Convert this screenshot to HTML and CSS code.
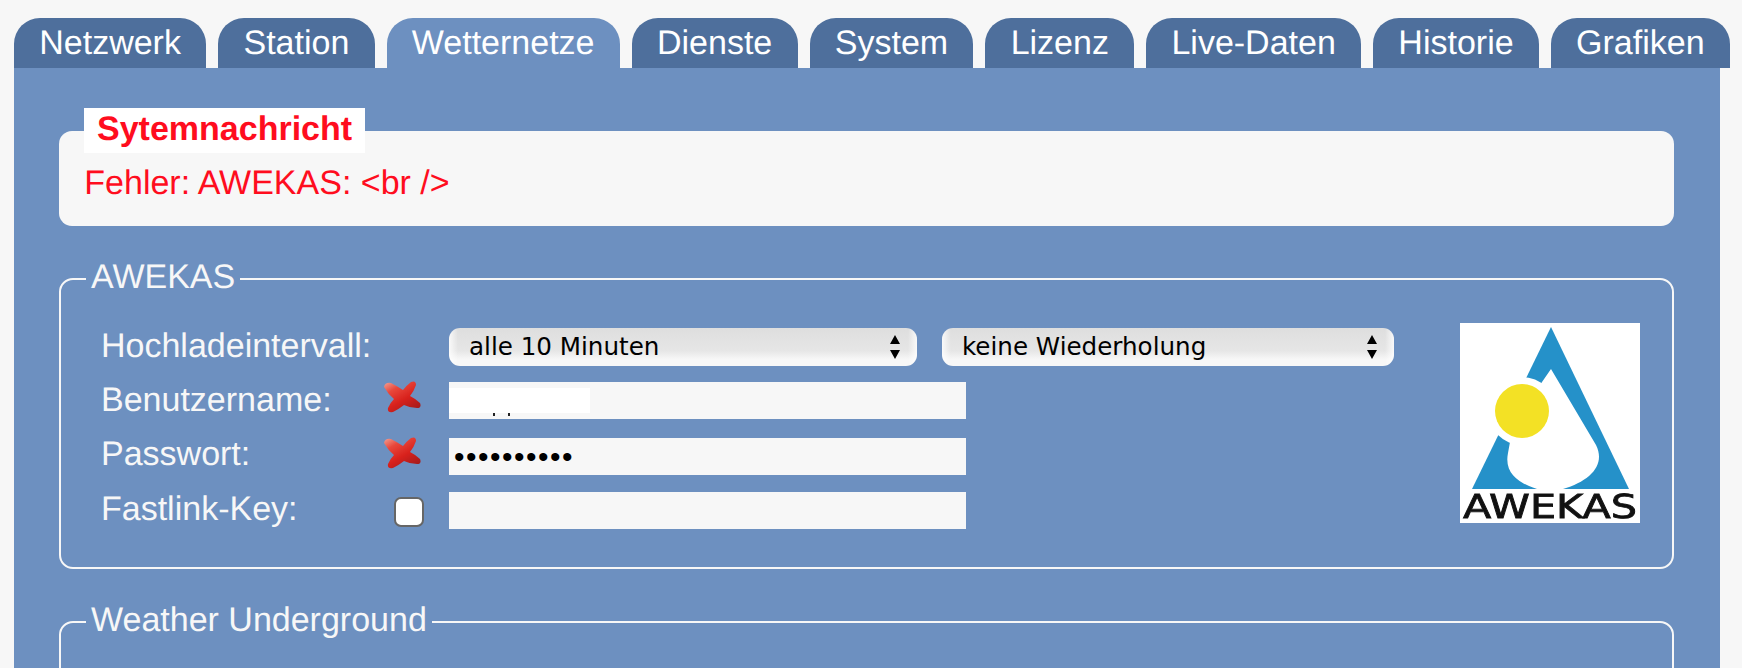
FILE: index.html
```html
<!DOCTYPE html>
<html lang="de">
<head>
    <meta charset="UTF-8">
    <meta name="viewport" content="width=device-width, initial-scale=1.0">
    <title>Wetternetze</title>
    <link rel="stylesheet" href="styles.css">
</head>
<body>
    <svg class="defs" width="0" height="0">
        <defs>
            <linearGradient id="crossFill" x1="0" y1="0" x2="0.7" y2="1">
                <stop offset="0" stop-color="#f4a79a"/>
                <stop offset="0.3" stop-color="#e8483c"/>
                <stop offset="0.65" stop-color="#d8211c"/>
                <stop offset="1" stop-color="#a81c1c"/>
            </linearGradient>
            <symbol id="cross" viewBox="0 0 38 33">
                <path fill="url(#crossFill)" d="M1 7 Q2 2 8 3 Q14 6 20 10 Q24 5 28 2 Q33 0 33 5 Q31 11 27 16 Q33 19 37 23 Q39 28 34 28 Q27 28 21 25 Q16 29 10 32 Q4 33 5 28 Q7 23 11 19 Q5 14 1 7 Z"/>
            </symbol>
        </defs>
    </svg>

    <nav class="tabs">
        <a class="tab">Netzwerk</a>
        <a class="tab">Station</a>
        <a class="tab active">Wetternetze</a>
        <a class="tab">Dienste</a>
        <a class="tab">System</a>
        <a class="tab">Lizenz</a>
        <a class="tab">Live-Daten</a>
        <a class="tab">Historie</a>
        <a class="tab">Grafiken</a>
    </nav>

    <main class="panel">
        <fieldset class="message">
            <legend>Sytemnachricht</legend>
            <p>Fehler: AWEKAS: &lt;br /&gt;</p>
        </fieldset>

        <fieldset class="group">
            <legend>AWEKAS</legend>
            <div class="group-body">
                <div class="form-grid">
                    <label>Hochladeintervall:</label>
                    <div class="select-row">
                        <div class="select-wrap wide">
                            <select><option>alle 10 Minuten</option></select>
                            <svg class="arrows" viewBox="0 0 12 24"><path d="M6 0 L11 9 H1 Z M1 15 H11 L6 24 Z"/></svg>
                        </div>
                        <div class="select-wrap">
                            <select><option>keine Wiederholung</option></select>
                            <svg class="arrows" viewBox="0 0 12 24"><path d="M6 0 L11 9 H1 Z M1 15 H11 L6 24 Z"/></svg>
                        </div>
                    </div>

                    <label>Benutzername:</label>
                    <svg class="cross"><use href="#cross"/></svg>
                    <div class="field">
                        <input type="text">
                        <div class="redact"></div>
                    </div>

                    <label class="label-pass">Passwort:</label>
                    <svg class="cross"><use href="#cross"/></svg>
                    <div class="field">
                        <input class="secret" type="password" value="abcdefghij">
                    </div>

                    <label class="label-key">Fastlink-Key:</label>
                    <input class="check" type="checkbox">
                    <div class="field">
                        <input type="text">
                    </div>
                </div>

                <svg class="logo" viewBox="0 0 180 200">
                    <rect width="180" height="200" fill="#fff"/>
                    <path fill="#2591c9" d="M91 4 L169 166 H12 Z"/>
                    <path fill="#fff" d="M91 46 L136 122 C146 142 130 158 103 166 H77 C58 160 44 150 48 130 L50 119 L82 59 Z"/>
                    <circle cx="62" cy="88" r="34" fill="#fff"/>
                    <circle cx="62" cy="88" r="27" fill="#f3e125"/>
                    <text x="3" y="195" textLength="174" lengthAdjust="spacingAndGlyphs" class="logo-text">AWEKAS</text>
                </svg>
            </div>
        </fieldset>

        <fieldset class="group">
            <legend>Weather Underground</legend>
            <div class="group-body"></div>
        </fieldset>
    </main>
</body>
</html>
```

FILE: styles.css
```css
html, body {
    height: 100%;
    overflow: hidden;
}
body {
    margin: 0;
    background-color: #f7f7f7;
    font-family: 'Liberation Sans', Arial, sans-serif;
    font-size: 34px;
    text-rendering: geometricPrecision;
    color: #f7f7f7;
}
.defs {
    position: absolute;
}
.tabs {
    display: flex;
    gap: 12px;
    margin: 18px 0 0 14px;
    width: 1740px;
}
.tab {
    height: 50px;
    line-height: 50px;
    padding: 0 25.25px;
    border-radius: 26px 26px 0 0;
    background-color: #4e6f9c;
    color: #fff;
}
.tab.active {
    background-color: #6d90c0;
}
.panel {
    margin-left: 14px;
    width: 1706px;
    height: 600px;
    box-sizing: border-box;
    padding: 40px 46px 0 45px;
    background-color: #6d90c0;
    overflow: hidden;
}
fieldset {
    margin: 0;
    padding: 0;
    min-width: 0;
}
.message {
    height: 118px;
    border: none;
    border-radius: 13px;
    background-color: #f7f7f7;
    padding: 0 26px 0 25.3px;
}
.message legend {
    padding: 0 12.7px 0 13px;
    margin-left: -0.3px;
    height: 45px;
    line-height: 43px;
    background-color: #fff;
    color: #ff0d1e;
    font-weight: bold;
}
.message p {
    margin: 0;
    line-height: 60px;
    color: #ff0d1e;
}
.group {
    margin-top: 36px;
    border: 2px solid #f7f7f7;
    border-radius: 14px;
}
.group legend {
    margin-left: 25px;
    padding: 0 5px 4px;
    line-height: 30px;
}
.group-body {
    display: flex;
    justify-content: space-between;
    padding: 27px 32px 38px 40px;
}
.form-grid {
    display: grid;
    grid-template-columns: 283px 65px 517px 428px;
    grid-template-rows: 54px 56px 54px 37px;
    margin-top: 5px;
    flex: none;
}
.form-grid label {
    grid-column: 1;
    line-height: 37px;
}
.form-grid label:first-child {
    line-height: 36px;
}
.form-grid .label-pass {
    margin-top: -2px;
}
.form-grid .label-key {
    margin-top: -1px;
}
.select-row {
    grid-column: 3 / 5;
    display: flex;
    gap: 25px;
    align-items: flex-start;
}
.select-wrap {
    position: relative;
    width: 452px;
}
.select-wrap.wide {
    width: 468px;
}
select {
    display: block;
    width: 100%;
    height: 38px;
    padding: 0 0 2px 20px;
    border: none;
    border-radius: 11px;
    appearance: none;
    font-family: 'DejaVu Sans', sans-serif;
    font-size: 24.6px;
    color: #000;
    background: linear-gradient(to right, rgba(255,255,255,0.8), rgba(255,255,255,0) 9px, rgba(255,255,255,0) calc(100% - 9px), rgba(255,255,255,0.8)),
        linear-gradient(to bottom, #dedede, #e6e6e6 60%, #f7f7f7 82%);
}
.arrows {
    position: absolute;
    right: 15px;
    top: 7px;
    width: 14px;
    height: 24px;
}
.cross {
    width: 38px;
    height: 33px;
    margin: -2px 0 0 -1px;
    filter: blur(0.4px);
}
.field {
    grid-column: 3;
    position: relative;
    height: 37px;
}
.field input {
    display: block;
    width: 100%;
    height: 37px;
    box-sizing: border-box;
    padding: 0 5px;
    border: none;
    background-color: #f7f7f7;
    font-family: 'Liberation Sans', sans-serif;
    font-size: 34px;
    color: #000;
}
.field input.secret {
    font-size: 30px;
    letter-spacing: 1.5px;
}
.redact {
    position: absolute;
    left: 0;
    top: 6px;
    width: 141px;
    height: 25px;
    background-color: #fff;
}
/* what sticks out under the white patch */
.redact::after {
    content: '';
    position: absolute;
    left: 44px;
    top: 25px;
    width: 2px;
    height: 3px;
    background-color: #222;
    box-shadow: 15px 0 #222;
}
.check {
    appearance: none;
    width: 30px;
    height: 30px;
    margin: 5px 0 0 10px;
    box-sizing: border-box;
    border: 2px solid #666;
    border-radius: 7px;
    background-color: #fff;
}
.logo {
    width: 180px;
    height: 200px;
    flex: none;
    overflow: visible;
    filter: blur(0.5px);
}
.logo-text {
    font-family: 'DejaVu Sans', sans-serif;
    font-size: 33px;
    fill: #111;
    stroke: #111;
    stroke-width: 0.8;
}
```
